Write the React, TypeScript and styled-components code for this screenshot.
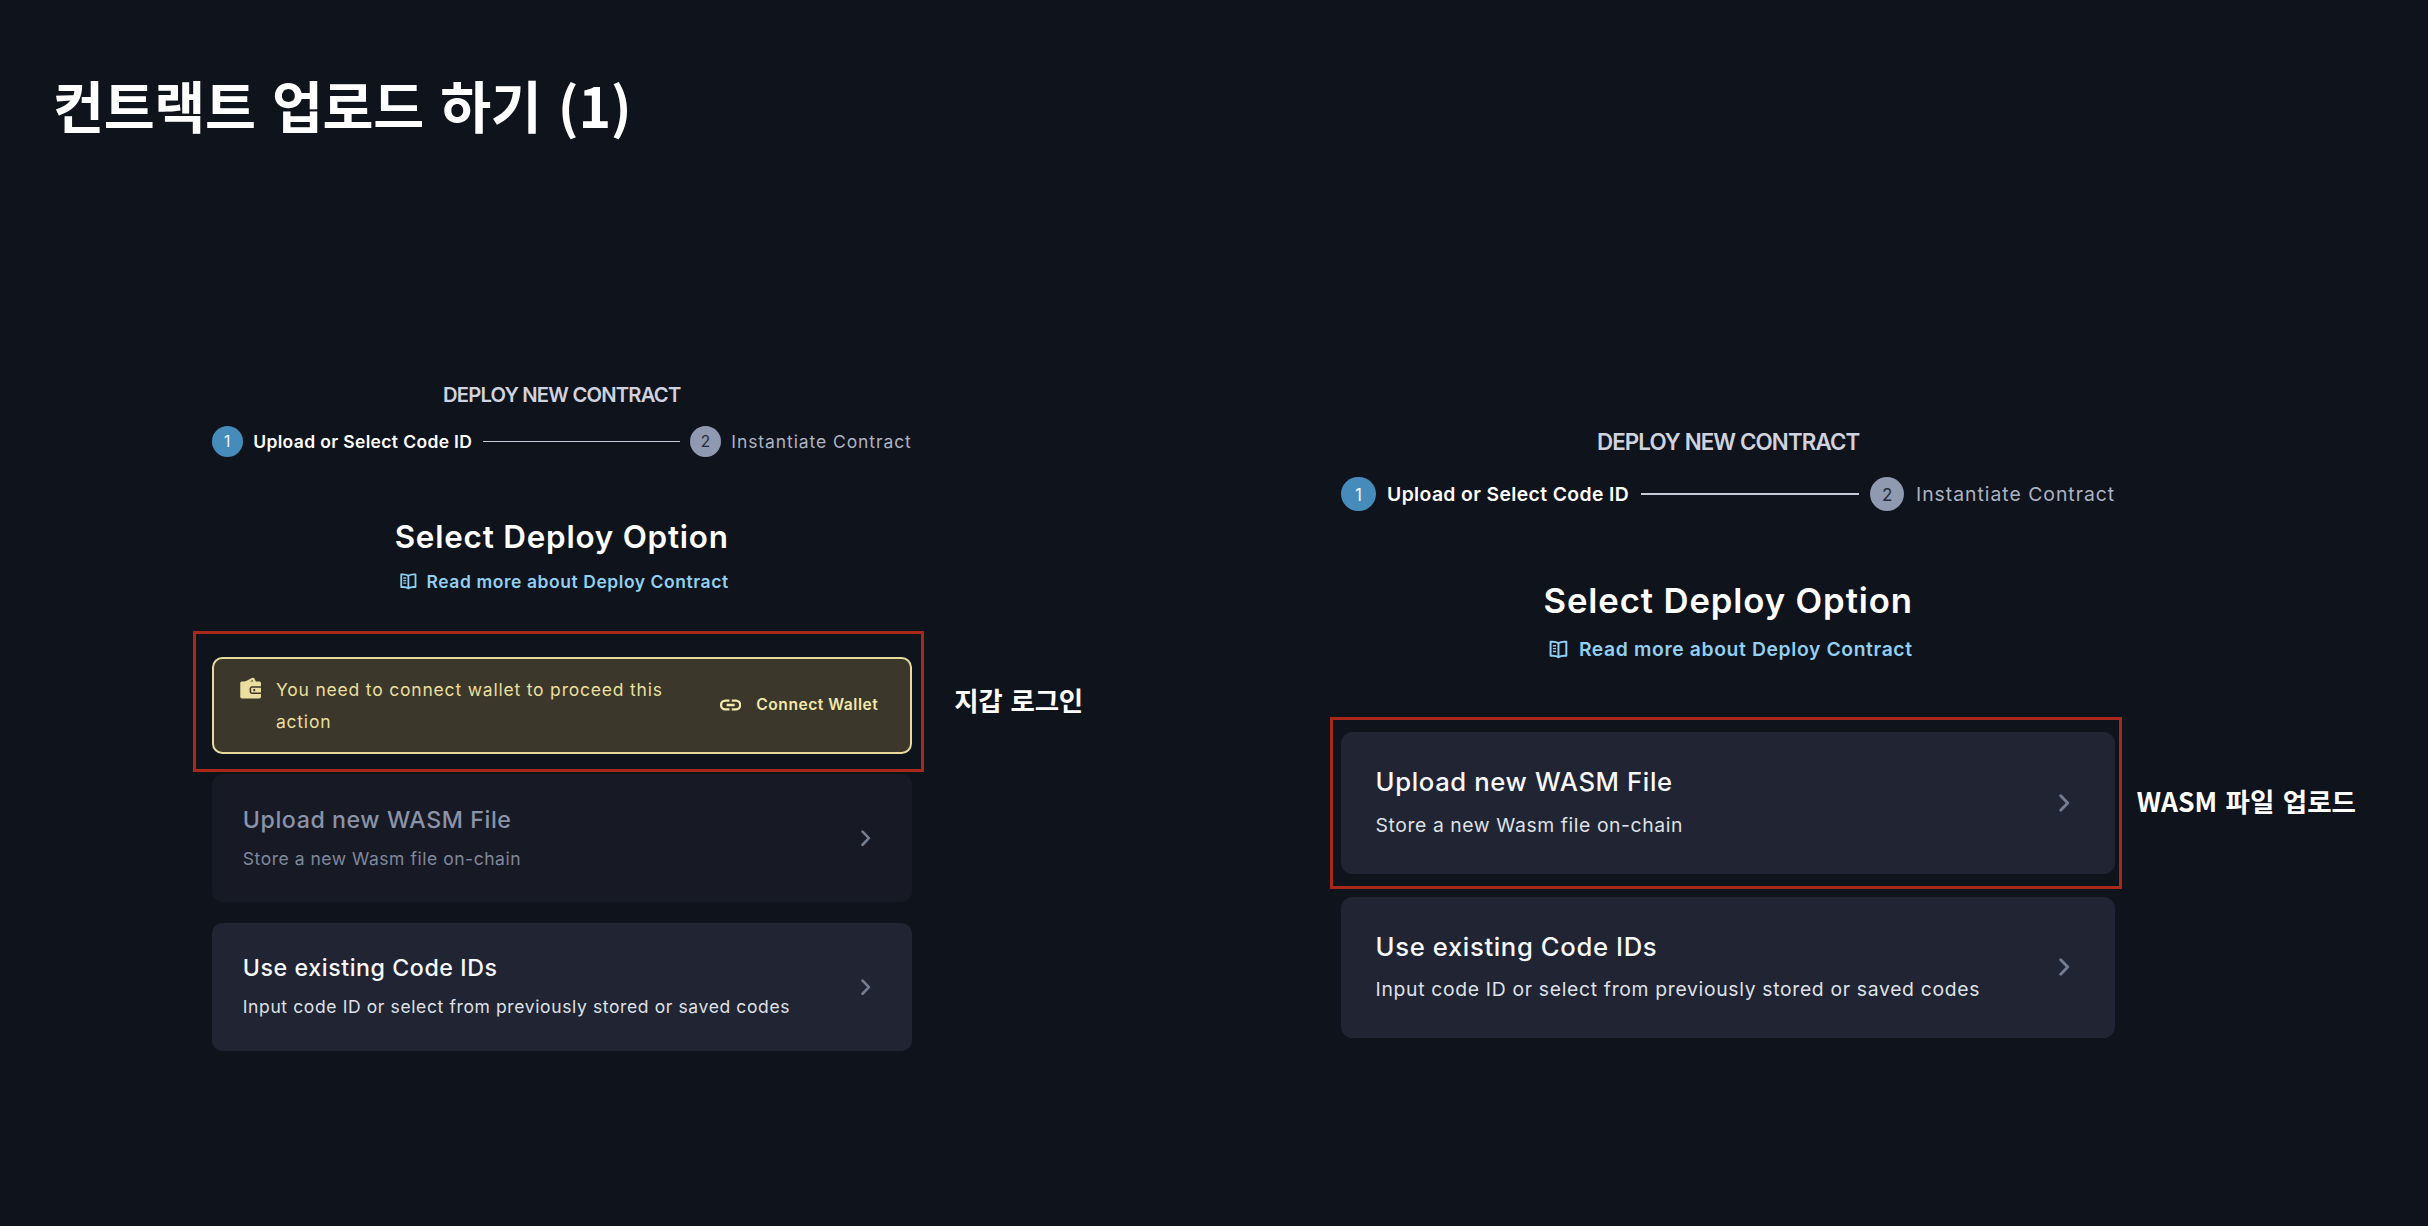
import React from "react";
import styled, { createGlobalStyle } from "styled-components";

const GlobalStyle = createGlobalStyle`
  *, *::before, *::after { box-sizing: border-box; }
  html, body { margin: 0; padding: 0; background: #0f131b; }
`;

const latin = `Inter, "Open Sans", sans-serif`;
const korean = `"Noto Sans CJK KR", "Noto Sans", sans-serif`;

const Slide = styled.main`
  width: 2428px;
  height: 1226px;
  overflow: hidden;
  display: flex;
  flex-direction: column;
  background: #0f131b;
  color: #fff;
  font-family: ${latin};
`;

const SlideTitle = styled.h1`
  margin: 64px 0 0 53px;
  height: 80px;
  font: 700 55.4px/80px ${korean};
  letter-spacing: -0.3px;
  word-spacing: 4px;
  white-space: nowrap;
`;

const Columns = styled.div`
  display: grid;
  grid-template-columns: 1129.5px 1fr;
  padding-left: 211.7px;
  margin-top: 235px;
`;

const Column = styled.section<{ $top: number; $gap: number }>`
  display: flex;
  align-items: flex-start;
  gap: ${(p) => p.$gap}px;
  padding-top: ${(p) => p.$top}px;
`;

const Note = styled.p<{ $top: number; $tracking: number }>`
  margin: ${(p) => p.$top}px 0 0;
  font: 700 26.5px/40px ${korean};
  letter-spacing: ${(p) => p.$tracking}px;
  word-spacing: 2.5px;
  white-space: nowrap;
`;

/* --u is one layout unit of the 540-unit wide form */
const Panel = styled.div<{ $unit: number }>`
  --u: ${(p) => p.$unit}px;
  width: calc(540 * var(--u));
  flex: none;
  display: flex;
  flex-direction: column;
  align-items: stretch;
`;

const Overline = styled.h2`
  margin: 0;
  text-align: center;
  font-weight: 600;
  font-size: calc(15.6 * var(--u));
  line-height: calc(24 * var(--u));
  letter-spacing: calc(-0.62 * var(--u));
  color: #cfd3df;
`;

const Steps = styled.div`
  display: flex;
  align-items: center;
  gap: calc(8 * var(--u));
  height: calc(24 * var(--u));
  margin-top: calc(12 * var(--u));
`;

const StepBadge = styled.span<{ $active?: boolean }>`
  flex: none;
  display: flex;
  align-items: center;
  justify-content: center;
  width: calc(24 * var(--u));
  height: calc(24 * var(--u));
  border-radius: 50%;
  font-size: calc(11.9 * var(--u));
  line-height: 1;
  background: ${(p) => (p.$active ? "#458cba" : "#8f99af")};
  color: ${(p) => (p.$active ? "#f2f6fa" : "#252b38")};
`;

const StepLabel = styled.span<{ $active?: boolean }>`
  font-size: calc(13.5 * var(--u));
  line-height: calc(24 * var(--u));
  font-weight: ${(p) => (p.$active ? 600 : 400)};
  letter-spacing: calc(${(p) => (p.$active ? 0.27 : 0.7)} * var(--u));
  color: ${(p) => (p.$active ? "#fff" : "#adb3c3")};
  white-space: nowrap;
`;

const StepLine = styled.span`
  flex: 1;
  height: calc(1 * var(--u));
  background: #c5cad9;
`;

const Heading = styled.h3`
  margin: calc(44.5 * var(--u)) 0 0;
  text-align: center;
  font-weight: 600;
  font-size: calc(24.2 * var(--u));
  line-height: calc(36 * var(--u));
  letter-spacing: calc(0.62 * var(--u));
  white-space: nowrap;
`;

const DocLink = styled.a`
  display: flex;
  align-items: center;
  justify-content: center;
  gap: calc(6 * var(--u));
  margin-top: calc(3.6 * var(--u));
  padding-left: calc(2.6 * var(--u));
  font-weight: 600;
  font-size: calc(13.5 * var(--u));
  line-height: calc(24 * var(--u));
  letter-spacing: calc(0.43 * var(--u));
  color: #91cff3;
  white-space: nowrap;
`;

const DocIcon = styled.svg`
  width: calc(16 * var(--u));
  height: calc(16 * var(--u));
  flex: none;
`;

const Options = styled.div`
  display: flex;
  flex-direction: column;
  gap: calc(16 * var(--u));
  margin-top: calc(46 * var(--u));
`;

const Marked = styled.div`
  position: relative;
`;

const Marker = styled.div<{ $inset: string }>`
  position: absolute;
  inset: ${(p) => p.$inset};
  border: 3px solid #a8291a;
  pointer-events: none;
`;

const Alert = styled.div`
  display: flex;
  align-items: center;
  justify-content: space-between;
  height: calc(75 * var(--u));
  padding: 0 calc(24.2 * var(--u)) 0 calc(20 * var(--u));
  border: calc(1.55 * var(--u)) solid #e6db9c;
  border-radius: calc(8 * var(--u));
  background: #3b382b;
  color: #eadf9f;
`;

const AlertMessage = styled.div`
  display: flex;
  align-items: flex-start;
  gap: calc(11.6 * var(--u));
  width: calc(345 * var(--u));
  padding-top: calc(0.8 * var(--u));
  font-size: calc(13.5 * var(--u));
  line-height: calc(24.5 * var(--u));
  letter-spacing: calc(0.62 * var(--u));
`;

const WalletIcon = styled.svg`
  flex: none;
  width: calc(16.4 * var(--u));
  height: calc(17 * var(--u));
  margin-top: calc(2.8 * var(--u));
`;

const ConnectButton = styled.button`
  display: flex;
  align-items: center;
  gap: calc(11.6 * var(--u));
  padding: 0;
  border: 0;
  background: none;
  color: #f5e8ac;
  font: inherit;
  font-weight: 600;
  font-size: calc(12 * var(--u));
  line-height: calc(20 * var(--u));
  letter-spacing: calc(0.42 * var(--u));
  white-space: nowrap;
`;

const LinkIcon = styled.svg`
  width: calc(16.4 * var(--u));
  height: calc(9.2 * var(--u));
`;

const Card = styled.div<{ $disabled?: boolean }>`
  display: flex;
  align-items: center;
  justify-content: space-between;
  height: calc(98.7 * var(--u));
  padding: 0 calc(31.6 * var(--u)) 0 calc(24 * var(--u));
  border-radius: calc(8 * var(--u));
  background: ${(p) => (p.$disabled ? "#171a24" : "#202433")};
  color: ${(p) => (p.$disabled ? "#8a93a9" : "#f7f8fb")};
`;

const CardText = styled.div`
  display: flex;
  flex-direction: column;
  gap: calc(4 * var(--u));
  white-space: nowrap;
`;

const CardTitle = styled.span`
  font-weight: 500;
  font-size: calc(17.9 * var(--u));
  line-height: calc(26.8 * var(--u));
  letter-spacing: calc(0.44 * var(--u));
`;

const CardHint = styled.span<{ $tracking: number; $disabled?: boolean }>`
  font-size: calc(13.5 * var(--u));
  line-height: calc(24.2 * var(--u));
  letter-spacing: calc(${(p) => p.$tracking} * var(--u));
  color: ${(p) => (p.$disabled ? "#80889c" : "#dfe1e7")};
`;

const Chevron = styled.svg`
  width: calc(7.4 * var(--u));
  height: calc(12.6 * var(--u));
  color: #747e93;
`;

const BookGlyph = () => (
  <DocIcon viewBox="0 0 16 16" fill="none" stroke="currentColor" strokeWidth="1.4" strokeLinejoin="round">
    <path d="M8 3.7C6.6 2.6 4.6 2.4 2.5 2.6V12.4C4.6 12.2 6.6 12.4 8 13.4C9.4 12.4 11.4 12.2 13.5 12.4V2.6C11.4 2.4 9.4 2.6 8 3.7ZM8 3.7V14" />
    <path d="M4.1 5.4H6.3M4.1 7.4H6.3M4.1 9.4H6.3" strokeWidth="1" />
  </DocIcon>
);

const WalletGlyph = () => (
  <WalletIcon viewBox="0 0 16.4 17" fill="none">
    <path d="M3.2 3.9L9.2 0.7C10 0.3 10.7 0.5 11.1 1.2L12.4 3.9" fill="currentColor" />
    <path d="M7.4 3.6L9.6 2.4L10.3 3.6Z" fill="#3b382b" />
    <path
      d="M1.6 3.4H14.8C15.7 3.4 16.2 3.9 16.2 4.8V7.1H9.4C8.2 7.1 7.4 7.9 7.4 9V11.2C7.4 12.3 8.2 13.1 9.4 13.1H16.2V15C16.2 15.9 15.7 16.5 14.8 16.5H1.6C.7 16.5 .2 15.9 .2 15V4.8C.2 3.9 .7 3.4 1.6 3.4Z"
      fill="currentColor"
    />
    <path
      fillRule="evenodd"
      d="M9.5 8.3H16.2V11.9H9.5C8.9 11.9 8.6 11.6 8.6 11.1V9.1C8.6 8.6 8.9 8.3 9.5 8.3ZM10.3 9.3V10.9H11.7V9.3Z"
      fill="currentColor"
    />
  </WalletIcon>
);

const ChainGlyph = () => (
  <LinkIcon viewBox="0 0 16.4 9.2" fill="none" stroke="currentColor" strokeWidth="1.8">
    <path d="M7.3 1.2H4.2A3.4 3.4 0 0 0 4.2 8H7.3M9.1 1.2H12.2A3.4 3.4 0 0 1 12.2 8H9.1M5.1 4.6H11.3" />
  </LinkIcon>
);

const ChevronGlyph = () => (
  <Chevron viewBox="0 0 7.4 12.6" fill="none" stroke="currentColor" strokeWidth="2" strokeLinecap="round" strokeLinejoin="round">
    <path d="M1.2 1.2L6.1 6.3L1.2 11.4" />
  </Chevron>
);

const FormHeader = () => (
  <>
    <Overline>DEPLOY NEW CONTRACT</Overline>
    <Steps>
      <StepBadge $active>1</StepBadge>
      <StepLabel $active>Upload or Select Code ID</StepLabel>
      <StepLine />
      <StepBadge>2</StepBadge>
      <StepLabel>Instantiate Contract</StepLabel>
    </Steps>
    <Heading>Select Deploy Option</Heading>
    <DocLink>
      <BookGlyph />
      Read more about Deploy Contract
    </DocLink>
  </>
);

const UploadOption = ({ disabled }: { disabled?: boolean }) => (
  <Card $disabled={disabled}>
    <CardText>
      <CardTitle>Upload new WASM File</CardTitle>
      <CardHint $tracking={0.41} $disabled={disabled}>
        Store a new Wasm file on-chain
      </CardHint>
    </CardText>
    <ChevronGlyph />
  </Card>
);

const ExistingOption = () => (
  <Card>
    <CardText>
      <CardTitle>Use existing Code IDs</CardTitle>
      <CardHint $tracking={0.475}>Input code ID or select from previously stored or saved codes</CardHint>
    </CardText>
    <ChevronGlyph />
  </Card>
);

export default function App() {
  return (
    <Slide>
      <GlobalStyle />
      <SlideTitle>컨트랙트 업로드 하기 (1)</SlideTitle>
      <Columns>
        <Column $top={0} $gap={42.5}>
          <Panel $unit={1.2963}>
            <FormHeader />
            <Options>
              <Marked>
                <Alert>
                  <AlertMessage>
                    <WalletGlyph />
                    <span>You need to connect wallet to proceed this action</span>
                  </AlertMessage>
                  <ConnectButton>
                    <ChainGlyph />
                    Connect Wallet
                  </ConnectButton>
                </Alert>
                <Marker $inset="-25.3px -12.5px -18.3px -18.7px" />
              </Marked>
              <UploadOption disabled />
              <ExistingOption />
            </Options>
          </Panel>
          <Note $top={300.5} $tracking={-0.3}>지갑 로그인</Note>
        </Column>
        <Column $top={46.3} $gap={21.5}>
          <Panel $unit={1.4333}>
            <FormHeader />
            <Options>
              <Marked>
                <UploadOption />
                <Marker $inset="-15.5px -7px -15px -11px" />
              </Marked>
              <ExistingOption />
            </Options>
          </Panel>
          <Note $top={356.2} $tracking={0}>WASM 파일 업로드</Note>
        </Column>
      </Columns>
    </Slide>
  );
}
